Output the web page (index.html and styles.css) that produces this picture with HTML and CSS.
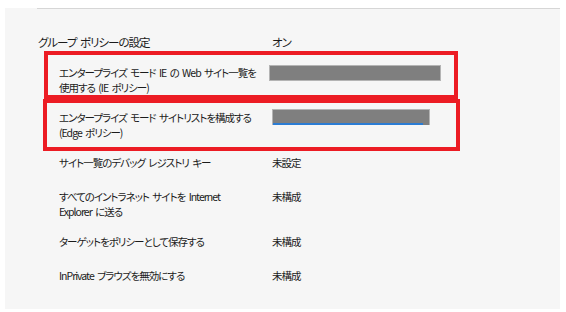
FILE: index.html
```html
<!DOCTYPE html>
<html lang="ja">
<head>
    <meta charset="utf-8">
    <title>グループ ポリシーの設定</title>
    <link rel="stylesheet" href="styles.css">
</head>
<body>
    <div class="panel">
        <div class="rule"></div>

        <div class="head">
            <div class="label">グループ ポリシーの設定</div>
            <div class="value">オン</div>
        </div>

        <div class="mark mark-ie">
            <div class="label">エンタープライズ モード IE の Web サイト一覧を<br>使用する (IE ポリシー)</div>
            <div class="bar"></div>
        </div>

        <div class="mark mark-edge">
            <div class="label">エンタープライズ モード サイトリストを構成する<br>(Edge ポリシー)</div>
            <div class="bar bar-edit"></div>
        </div>

        <div class="row">
            <div class="label">サイト一覧のデバッグ レジストリ キー</div>
            <div class="value">未設定</div>
        </div>
        <div class="row row-tall">
            <div class="label">すべてのイントラネット サイトを Internet<br>Explorer に送る</div>
            <div class="value">未構成</div>
        </div>
        <div class="row">
            <div class="label">ターゲットをポリシーとして保存する</div>
            <div class="value">未構成</div>
        </div>
        <div class="row">
            <div class="label">InPrivate ブラウズを無効にする</div>
            <div class="value">未構成</div>
        </div>
    </div>
</body>
</html>
```

FILE: styles.css
```css
html, body
{
    margin: 0;
    padding: 0;
    background-color: #fff;
}
body
{
    font-family: "Noto Sans CJK JP", "Liberation Sans", sans-serif;
    font-size: 10.5px;
    line-height: 15px;
    letter-spacing: -1px;
    word-spacing: 2px;
    color: #1b1b1b;
    font-feature-settings: "palt";
}
.label
{
    white-space: nowrap;
}
.panel
{
    margin: 8px 6px 0 5px;
    height: 301px;
    background-color: #f6f6f6;
}
.rule
{
    margin-left: 32px;
    border-top: 1px solid #d6d6d6;
}

/* header line */
.head
{
    display: grid;
    grid-template-columns: 234px auto;
    padding: 25px 0 0 33px;
    height: 17px;
    font-size: 11.5px;
    line-height: 16px;
}

/* red highlight boxes */
.mark
{
    display: grid;
    border: 4px solid #ec1c24;
    box-sizing: border-box;
}
.mark-ie
{
    grid-template-columns: 210px 172px;
    margin-left: 39px;
    width: 414px;
    height: 48px;
    padding: 10px 0 0 11px;
}
.mark-edge
{
    grid-template-columns: 213px 158px;
    margin-left: 38px;
    width: 417px;
    height: 52px;
    padding: 7px 0 0 12px;
}
.bar
{
    height: 16px;
    background-color: #7f7f7f;
    border: 1px solid #b4b4b4;
    box-sizing: border-box;
}
.bar-edit
{
    height: 16px;
    margin-top: -1px;
    border-bottom: 0;
    background-image: linear-gradient(#2b7cd3, #2b7cd3);
    background-size: 150px 2px;
    background-position: left bottom;
    background-repeat: no-repeat;
}

/* plain rows */
.row
{
    display: grid;
    grid-template-columns: 213px auto;
    padding: 4px 0 0 54px;
    height: 30px;
}
.row-tall
{
    height: 41px;
}
```
